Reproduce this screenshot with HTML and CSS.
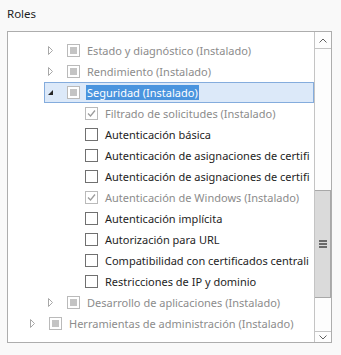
FILE: index.html
```html
<!DOCTYPE html>
<html>
<head>
    <title>Roles</title>
    <link rel="stylesheet" href="styles.css">
</head>
<body>
    <div class="title">Roles</div>
    <div class="listbox">
        <div class="tree">
            <div class="row lvl1">
                <span class="exp"><svg width="6" height="10"><polygon points="0.5,0.5 4.5,4.5 0.5,8.5" fill="none" stroke="#a8a8a8"/></svg></span>
                <span class="cb dis partial"></span>
                <span class="label dis">Estado y diagnóstico (Instalado)</span>
            </div>
            <div class="row lvl1">
                <span class="exp"><svg width="6" height="10"><polygon points="0.5,0.5 4.5,4.5 0.5,8.5" fill="none" stroke="#a8a8a8"/></svg></span>
                <span class="cb dis partial"></span>
                <span class="label dis">Rendimiento (Instalado)</span>
            </div>
            <div class="row lvl1 selected">
                <span class="exp"><svg width="6" height="10"><polygon points="0,7 5,2 5,7" fill="#262626"/></svg></span>
                <span class="cb dis partial"></span>
                <span class="label sel">Seguridad (Instalado)</span>
            </div>
            <div class="row lvl2">
                <span class="exp"></span>
                <span class="cb dis"><svg width="11" height="11"><polyline points="2,5.5 4.5,8 9,2.5" fill="none" stroke="#9c9c9c" stroke-width="1.3"/></svg></span>
                <span class="label dis">Filtrado de solicitudes (Instalado)</span>
            </div>
            <div class="row lvl2">
                <span class="exp"></span>
                <span class="cb"></span>
                <span class="label">Autenticación básica</span>
            </div>
            <div class="row lvl2">
                <span class="exp"></span>
                <span class="cb"></span>
                <span class="label">Autenticación de asignaciones de certifi</span>
            </div>
            <div class="row lvl2">
                <span class="exp"></span>
                <span class="cb"></span>
                <span class="label">Autenticación de asignaciones de certifi</span>
            </div>
            <div class="row lvl2">
                <span class="exp"></span>
                <span class="cb dis"><svg width="11" height="11"><polyline points="2,5.5 4.5,8 9,2.5" fill="none" stroke="#9c9c9c" stroke-width="1.3"/></svg></span>
                <span class="label dis">Autenticación de Windows (Instalado)</span>
            </div>
            <div class="row lvl2">
                <span class="exp"></span>
                <span class="cb"></span>
                <span class="label">Autenticación implícita</span>
            </div>
            <div class="row lvl2">
                <span class="exp"></span>
                <span class="cb"></span>
                <span class="label">Autorización para URL</span>
            </div>
            <div class="row lvl2">
                <span class="exp"></span>
                <span class="cb"></span>
                <span class="label">Compatibilidad con certificados centrali</span>
            </div>
            <div class="row lvl2">
                <span class="exp"></span>
                <span class="cb"></span>
                <span class="label">Restricciones de IP y dominio</span>
            </div>
            <div class="row lvl1">
                <span class="exp"><svg width="6" height="10"><polygon points="0.5,0.5 4.5,4.5 0.5,8.5" fill="none" stroke="#a8a8a8"/></svg></span>
                <span class="cb dis partial"></span>
                <span class="label dis">Desarrollo de aplicaciones (Instalado)</span>
            </div>
            <div class="row lvl0">
                <span class="exp"><svg width="6" height="10"><polygon points="0.5,0.5 4.5,4.5 0.5,8.5" fill="none" stroke="#a8a8a8"/></svg></span>
                <span class="cb dis partial"></span>
                <span class="label dis">Herramientas de administración (Instalado)</span>
            </div>
        </div>
        <div class="scrollbar">
            <div class="sb-btn up"><svg width="8" height="5"><polyline points="0.5,4.5 4,1 7.5,4.5" fill="none" stroke="#606060"/></svg></div>
            <div class="sb-track">
                <div class="thumb"><svg width="8" height="8"><rect x="0" y="0" width="8" height="2" fill="#6a6a6a"/><rect x="0" y="3" width="8" height="2" fill="#6a6a6a"/><rect x="0" y="6" width="8" height="2" fill="#6a6a6a"/></svg></div>
            </div>
            <div class="sb-btn down"><svg width="8" height="5"><polyline points="0.5,0.5 4,4 7.5,0.5" fill="none" stroke="#606060"/></svg></div>
        </div>
    </div>
</body>
</html>
```
FILE: styles.css
```css
body {
  margin: 0;
  background: #f9f9f9;
  font-family: "Noto Sans", "Open Sans", sans-serif;
  font-size: 11px;
  color: #1e1e1e;
}
.title {
  height: 31px;
  box-sizing: border-box;
  padding: 6px 0 0 7px;
  line-height: 16px;
  font-size: 11.5px;
}
.listbox {
  margin-left: 7px;
  width: 325px;
  height: 312px;
  box-sizing: border-box;
  border: 1px solid #adadad;
  background: #fff;
  display: flex;
}
.tree {
  flex: 1;
  overflow: hidden;
  padding-top: 8px;
}
.row {
  height: 21px;
  box-sizing: border-box;
  display: flex;
  align-items: center;
  white-space: nowrap;
}
.lvl0 { padding-left: 22px; }
.lvl1 { padding-left: 40px; }
.lvl2 { padding-left: 58px; }
.row.selected {
  margin-left: 36px;
  padding-left: 3px;
  border: 1px solid #84acdd;
  background: #dce9f9;
}
.exp {
  width: 19px;
  flex: none;
  display: flex;
  align-items: center;
}
.cb {
  width: 13px;
  height: 13px;
  flex: none;
  box-sizing: border-box;
  border: 1px solid #707070;
  background: #fff;
  margin-right: 7px;
  display: flex;
  align-items: center;
  justify-content: center;
}
.cb.dis {
  border-color: #bababa;
}
.cb.partial::after {
  content: "";
  width: 7px;
  height: 7px;
  background: #c4c4c4;
}
.label.dis {
  color: #8c8c8c;
}
.label.sel {
  background: #4a94de;
  color: #fff;
  padding: 0 1px;
  margin-left: -1px;
  line-height: 15px;
}
.scrollbar {
  width: 16px;
  flex: none;
  border-left: 1px solid #c4c4c4;
  display: flex;
  flex-direction: column;
  background: #fdfdfd;
}
.sb-btn {
  display: flex;
  align-items: center;
  justify-content: center;
  flex: none;
}
.sb-btn.up {
  height: 17px;
  border-bottom: 1px solid #c4c4c4;
  box-sizing: border-box;
}
.sb-btn.down {
  height: 11px;
  border-top: 1px solid #c4c4c4;
  box-sizing: border-box;
}
.sb-track {
  flex: 1;
}
.thumb {
  margin-top: 141px;
  height: 108px;
  box-sizing: border-box;
  border-top: 1px solid #a8a8a8;
  border-bottom: 1px solid #a8a8a8;
  border-right: 1px solid #a8a8a8;
  background: #dadada;
  display: flex;
  align-items: center;
  justify-content: center;
}
```
